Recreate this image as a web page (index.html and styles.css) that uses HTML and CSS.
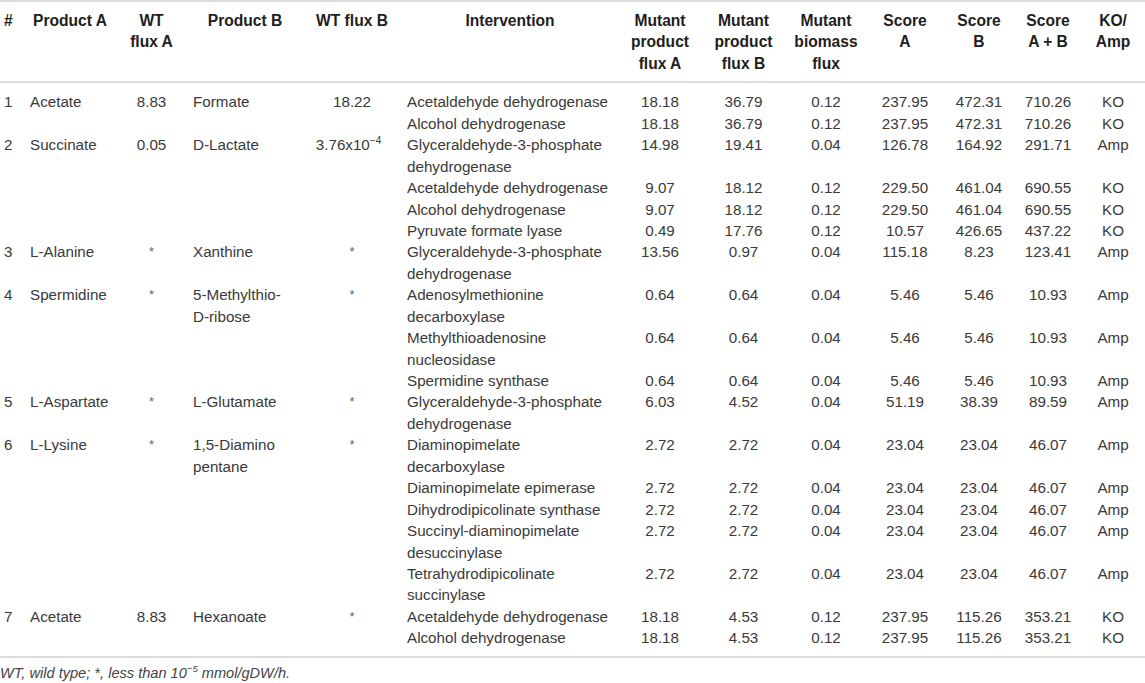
FILE: index.html
```html
<!DOCTYPE html>
<html>
<head>
<meta charset="utf-8">
<link rel="stylesheet" href="styles.css">
</head>
<body>
<table class="flux-table">
<colgroup>
<col class="c-num"><col class="c-pa"><col class="c-wa"><col class="c-pb"><col class="c-wb"><col class="c-int"><col class="c-ma"><col class="c-mb"><col class="c-bio"><col class="c-sa"><col class="c-sb"><col class="c-sab"><col class="c-ko">
</colgroup>
<thead>
<tr>
<th class="left">#</th>
<th>Product A</th>
<th>WT<br>flux A</th>
<th>Product B</th>
<th>WT flux B</th>
<th>Intervention</th>
<th>Mutant<br>product<br>flux A</th>
<th>Mutant<br>product<br>flux B</th>
<th>Mutant<br>biomass<br>flux</th>
<th>Score<br>A</th>
<th>Score<br>B</th>
<th>Score<br>A + B</th>
<th>KO/<br>Amp</th>
</tr>
</thead>
<tbody>
<tr class="first"><td class="left">1</td><td class="left">Acetate</td><td>8.83</td><td class="left">Formate</td><td>18.22</td><td class="left">Acetaldehyde dehydrogenase</td><td>18.18</td><td>36.79</td><td>0.12</td><td>237.95</td><td>472.31</td><td>710.26</td><td>KO</td></tr>
<tr><td></td><td></td><td></td><td></td><td></td><td class="left">Alcohol dehydrogenase</td><td>18.18</td><td>36.79</td><td>0.12</td><td>237.95</td><td>472.31</td><td>710.26</td><td>KO</td></tr>
<tr><td class="left">2</td><td class="left">Succinate</td><td>0.05</td><td class="left">D-Lactate</td><td class="sci">3.76x10<sup>−4</sup></td><td class="left">Glyceraldehyde-3-phosphate<br>dehydrogenase</td><td>14.98</td><td>19.41</td><td>0.04</td><td>126.78</td><td>164.92</td><td>291.71</td><td>Amp</td></tr>
<tr><td></td><td></td><td></td><td></td><td></td><td class="left">Acetaldehyde dehydrogenase</td><td>9.07</td><td>18.12</td><td>0.12</td><td>229.50</td><td>461.04</td><td>690.55</td><td>KO</td></tr>
<tr><td></td><td></td><td></td><td></td><td></td><td class="left">Alcohol dehydrogenase</td><td>9.07</td><td>18.12</td><td>0.12</td><td>229.50</td><td>461.04</td><td>690.55</td><td>KO</td></tr>
<tr><td></td><td></td><td></td><td></td><td></td><td class="left">Pyruvate formate lyase</td><td>0.49</td><td>17.76</td><td>0.12</td><td>10.57</td><td>426.65</td><td>437.22</td><td>KO</td></tr>
<tr><td class="left">3</td><td class="left">L-Alanine</td><td class="star">*</td><td class="left">Xanthine</td><td class="star">*</td><td class="left">Glyceraldehyde-3-phosphate<br>dehydrogenase</td><td>13.56</td><td>0.97</td><td>0.04</td><td>115.18</td><td>8.23</td><td>123.41</td><td>Amp</td></tr>
<tr><td class="left">4</td><td class="left">Spermidine</td><td class="star">*</td><td class="left">5-Methylthio-<br>D-ribose</td><td class="star">*</td><td class="left">Adenosylmethionine<br>decarboxylase</td><td>0.64</td><td>0.64</td><td>0.04</td><td>5.46</td><td>5.46</td><td>10.93</td><td>Amp</td></tr>
<tr><td></td><td></td><td></td><td></td><td></td><td class="left">Methylthioadenosine<br>nucleosidase</td><td>0.64</td><td>0.64</td><td>0.04</td><td>5.46</td><td>5.46</td><td>10.93</td><td>Amp</td></tr>
<tr><td></td><td></td><td></td><td></td><td></td><td class="left">Spermidine synthase</td><td>0.64</td><td>0.64</td><td>0.04</td><td>5.46</td><td>5.46</td><td>10.93</td><td>Amp</td></tr>
<tr><td class="left">5</td><td class="left">L-Aspartate</td><td class="star">*</td><td class="left">L-Glutamate</td><td class="star">*</td><td class="left">Glyceraldehyde-3-phosphate<br>dehydrogenase</td><td>6.03</td><td>4.52</td><td>0.04</td><td>51.19</td><td>38.39</td><td>89.59</td><td>Amp</td></tr>
<tr><td class="left">6</td><td class="left">L-Lysine</td><td class="star">*</td><td class="left">1,5-Diamino<br>pentane</td><td class="star">*</td><td class="left">Diaminopimelate<br>decarboxylase</td><td>2.72</td><td>2.72</td><td>0.04</td><td>23.04</td><td>23.04</td><td>46.07</td><td>Amp</td></tr>
<tr><td></td><td></td><td></td><td></td><td></td><td class="left">Diaminopimelate epimerase</td><td>2.72</td><td>2.72</td><td>0.04</td><td>23.04</td><td>23.04</td><td>46.07</td><td>Amp</td></tr>
<tr><td></td><td></td><td></td><td></td><td></td><td class="left">Dihydrodipicolinate synthase</td><td>2.72</td><td>2.72</td><td>0.04</td><td>23.04</td><td>23.04</td><td>46.07</td><td>Amp</td></tr>
<tr><td></td><td></td><td></td><td></td><td></td><td class="left">Succinyl-diaminopimelate<br>desuccinylase</td><td>2.72</td><td>2.72</td><td>0.04</td><td>23.04</td><td>23.04</td><td>46.07</td><td>Amp</td></tr>
<tr><td></td><td></td><td></td><td></td><td></td><td class="left">Tetrahydrodipicolinate<br>succinylase</td><td>2.72</td><td>2.72</td><td>0.04</td><td>23.04</td><td>23.04</td><td>46.07</td><td>Amp</td></tr>
<tr><td class="left">7</td><td class="left">Acetate</td><td>8.83</td><td class="left">Hexanoate</td><td class="star">*</td><td class="left">Acetaldehyde dehydrogenase</td><td>18.18</td><td>4.53</td><td>0.12</td><td>237.95</td><td>115.26</td><td>353.21</td><td>KO</td></tr>
<tr class="last"><td></td><td></td><td></td><td></td><td></td><td class="left">Alcohol dehydrogenase</td><td>18.18</td><td>4.53</td><td>0.12</td><td>237.95</td><td>115.26</td><td>353.21</td><td>KO</td></tr>
</tbody>
</table>
<p class="footnote">WT, wild type; *, less than 10<sup>−5</sup> mmol/gDW/h.</p>
</body>
</html>
```
FILE: styles.css
```css
html, body {
  margin: 0;
  padding: 0;
  background: #ffffff;
}
body {
  font-family: "Liberation Sans", Arial, Helvetica, sans-serif;
  color: #333333;
}
.flux-table {
  width: 1145px;
  border-collapse: collapse;
  table-layout: fixed;
  font-size: 15.2px;
  line-height: 21.44px;
}
.c-num { width: 25px; }
.c-pa { width: 90px; }
.c-wa { width: 73px; }
.c-pb { width: 114px; }
.c-wb { width: 100px; }
.c-int { width: 216px; }
.c-ma { width: 84px; }
.c-mb { width: 83px; }
.c-bio { width: 82px; }
.c-sa { width: 76px; }
.c-sb { width: 72px; }
.c-sab { width: 66px; }
.c-ko { width: 64px; }

.flux-table thead tr {
  border-top: 2px solid #dcdcdc;
  border-bottom: 2px solid #dcdcdc;
}
.flux-table th {
  font-weight: bold;
  font-size: 15.6px;
  color: #1e1e1e;
  text-align: center;
  vertical-align: top;
  padding: 8px 5px 7px 5px;
  white-space: nowrap;
}
.flux-table td {
  text-align: center;
  vertical-align: top;
  padding: 0 5px;
  white-space: nowrap;
  color: #3a3a3a;
}
.flux-table th:first-child,
.flux-table td:first-child {
  padding-left: 4px;
  padding-right: 0;
}
.flux-table .left {
  text-align: left;
}
.flux-table tr.first td {
  padding-top: 8px;
}
.flux-table tr.last td {
  padding-bottom: 7px;
}
.flux-table tbody {
  border-bottom: 2px solid #dcdcdc;
}
.flux-table .star {
  color: #666666;
  font-size: 13px;
}
.flux-table .sci {
  padding-right: 12px;
}
sup {
  font-size: 10px;
  line-height: 0;
  vertical-align: 6px;
}
.footnote {
  margin: 6px 0 0 0;
  font-size: 14.6px;
  line-height: 18px;
  font-style: italic;
  color: #444444;
}
.footnote sup {
  font-size: 9.5px;
}
```
